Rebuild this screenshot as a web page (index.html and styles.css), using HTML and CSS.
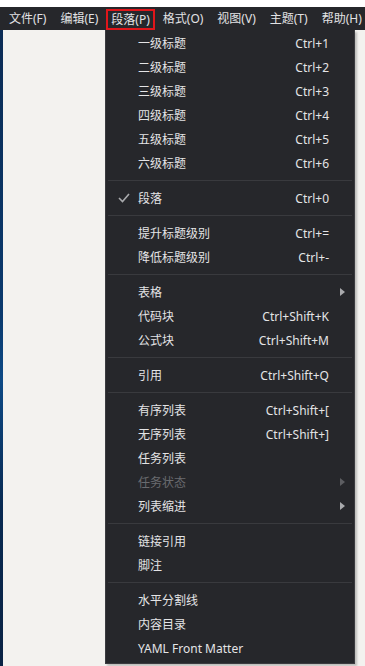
FILE: index.html
```html
<!DOCTYPE html>
<html lang="zh-CN">
<head>
<meta charset="utf-8">
<title>段落菜单</title>
<link rel="stylesheet" href="styles.css">
</head>
<body>
<div class="topstrip"></div>
<nav class="menubar">
  <span class="mb-item">文件(F)</span>
  <span class="mb-item">编辑(E)</span>
  <span class="mb-item active">段落(P)</span>
  <span class="mb-item">格式(O)</span>
  <span class="mb-item">视图(V)</span>
  <span class="mb-item">主题(T)</span>
  <span class="mb-item">帮助(H)</span>
</nav>
<div class="main">
  <div class="desk"></div>
  <div class="content"></div>
  <div class="dropdown">
    <div class="mi"><span class="chk"></span><span class="lb">一级标题</span><span class="sc">Ctrl+1</span><span class="ar"></span></div>
    <div class="mi"><span class="chk"></span><span class="lb">二级标题</span><span class="sc">Ctrl+2</span><span class="ar"></span></div>
    <div class="mi"><span class="chk"></span><span class="lb">三级标题</span><span class="sc">Ctrl+3</span><span class="ar"></span></div>
    <div class="mi"><span class="chk"></span><span class="lb">四级标题</span><span class="sc">Ctrl+4</span><span class="ar"></span></div>
    <div class="mi"><span class="chk"></span><span class="lb">五级标题</span><span class="sc">Ctrl+5</span><span class="ar"></span></div>
    <div class="mi"><span class="chk"></span><span class="lb">六级标题</span><span class="sc">Ctrl+6</span><span class="ar"></span></div>
    <div class="sep"></div>
    <div class="mi"><span class="chk"><svg width="12" height="10" viewBox="0 0 12 10"><polyline points="1,5 4.5,8.5 11,1" fill="none" stroke="#a9aaad" stroke-width="1.6"/></svg></span><span class="lb">段落</span><span class="sc">Ctrl+0</span><span class="ar"></span></div>
    <div class="sep"></div>
    <div class="mi"><span class="chk"></span><span class="lb">提升标题级别</span><span class="sc">Ctrl+=</span><span class="ar"></span></div>
    <div class="mi"><span class="chk"></span><span class="lb">降低标题级别</span><span class="sc">Ctrl+-</span><span class="ar"></span></div>
    <div class="sep"></div>
    <div class="mi"><span class="chk"></span><span class="lb">表格</span><span class="sc"></span><span class="ar"><svg width="5" height="8" viewBox="0 0 5 8"><polygon points="0,0 5,4 0,8" fill="#a9aaad"/></svg></span></div>
    <div class="mi"><span class="chk"></span><span class="lb">代码块</span><span class="sc">Ctrl+Shift+K</span><span class="ar"></span></div>
    <div class="mi"><span class="chk"></span><span class="lb">公式块</span><span class="sc">Ctrl+Shift+M</span><span class="ar"></span></div>
    <div class="sep"></div>
    <div class="mi"><span class="chk"></span><span class="lb">引用</span><span class="sc">Ctrl+Shift+Q</span><span class="ar"></span></div>
    <div class="sep"></div>
    <div class="mi"><span class="chk"></span><span class="lb">有序列表</span><span class="sc">Ctrl+Shift+[</span><span class="ar"></span></div>
    <div class="mi"><span class="chk"></span><span class="lb">无序列表</span><span class="sc">Ctrl+Shift+]</span><span class="ar"></span></div>
    <div class="mi"><span class="chk"></span><span class="lb">任务列表</span><span class="sc"></span><span class="ar"></span></div>
    <div class="mi disabled"><span class="chk"></span><span class="lb">任务状态</span><span class="sc"></span><span class="ar"><svg width="5" height="8" viewBox="0 0 5 8"><polygon points="0,0 5,4 0,8" fill="#5d5e62"/></svg></span></div>
    <div class="mi"><span class="chk"></span><span class="lb">列表缩进</span><span class="sc"></span><span class="ar"><svg width="5" height="8" viewBox="0 0 5 8"><polygon points="0,0 5,4 0,8" fill="#a9aaad"/></svg></span></div>
    <div class="sep"></div>
    <div class="mi"><span class="chk"></span><span class="lb">链接引用</span><span class="sc"></span><span class="ar"></span></div>
    <div class="mi"><span class="chk"></span><span class="lb">脚注</span><span class="sc"></span><span class="ar"></span></div>
    <div class="sep"></div>
    <div class="mi"><span class="chk"></span><span class="lb">水平分割线</span><span class="sc"></span><span class="ar"></span></div>
    <div class="mi"><span class="chk"></span><span class="lb">内容目录</span><span class="sc"></span><span class="ar"></span></div>
    <div class="mi"><span class="chk"></span><span class="lb">YAML Front Matter</span><span class="sc"></span><span class="ar"></span></div>
  </div>
</div>
</body>
</html>
```

FILE: styles.css
```css
html, body {
  margin: 0;
  padding: 0;
  height: 100%;
  overflow: hidden;
}
body {
  font-family: "Noto Sans", "Noto Sans CJK SC", sans-serif;
  font-size: 12px;
  background: #f3f2ef;
  display: flex;
  flex-direction: column;
}
.topstrip {
  height: 7px;
  background: #ffffff;
  flex: none;
}
.menubar {
  flex: none;
  height: 23px;
  background: #26272b;
  display: flex;
  align-items: stretch;
  padding-left: 3px;
  gap: 2px;
  overflow: hidden;
  white-space: nowrap;
}
.mb-item {
  flex: none;
  white-space: nowrap;
  color: #e2e2e4;
  padding: 0 6px;
  display: flex;
  align-items: center;
  line-height: 1;
  box-sizing: border-box;
  height: 23px;
  padding-top: 1px;
}
.mb-item.active {
  outline: 2px solid #e0161b;
  outline-offset: -2px;
  margin-top: 2px;
  height: 21px;
  padding-top: 0;
  padding-left: 5px;
  padding-right: 5px;
}
.main {
  flex: 1;
  display: flex;
  position: relative;
}
.desk {
  width: 3px;
  background: linear-gradient(180deg, #0b2c55 0%, #0a3a6e 45%, #0d4a86 55%, #082a52 75%, #0a2344 100%);
}
.content {
  flex: 1;
  background: #f3f2ef;
}
.dropdown {
  position: absolute;
  left: 105px;
  top: 0;
  width: 250px;
  box-sizing: border-box;
  background: #26272b;
  border: 1px solid #3a3b3f;
  border-top: none;
  padding: 1px 1px 3px;
  box-shadow: 2px 2px 2px rgba(0, 0, 0, 0.22);
}
.mi {
  display: grid;
  grid-template-columns: 31px 1fr auto 24px;
  align-items: center;
  height: 24px;
  color: #e4e4e6;
  white-space: nowrap;
}
.mi.disabled {
  color: #6a6b6f;
}
.chk {
  display: flex;
  justify-content: flex-end;
  padding-right: 8px;
}
.chk svg { display: block; }
.sc {
  text-align: right;
  color: #e4e4e6;
}
.ar {
  display: flex;
  justify-content: flex-end;
  padding-right: 8px;
}
.ar svg { display: block; }
.sep {
  height: 1px;
  background: #393a3e;
  margin: 5px 1px;
}
```
